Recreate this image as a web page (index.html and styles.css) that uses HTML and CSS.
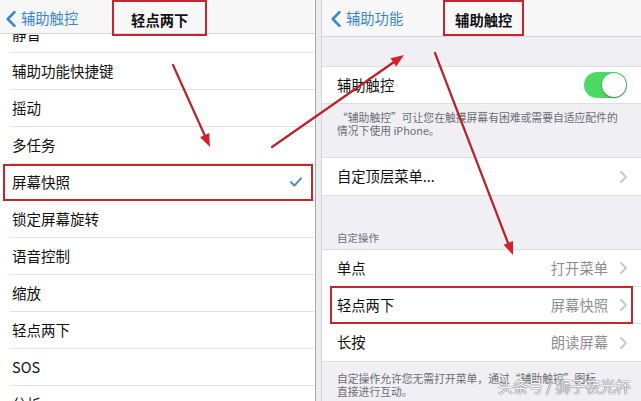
FILE: index.html
```html
<!DOCTYPE html>
<html lang="zh-CN">
<head>
<meta charset="utf-8">
<title>辅助触控</title>
<link rel="stylesheet" href="styles.css">
</head>
<body>
<div class="shot">
  <section class="panel panel-left">
    <header class="nav">
      <a class="back"><svg class="back-chev" width="10" height="16" viewBox="0 0 10 16"><polyline points="8.5,1.2 1.8,8 8.5,14.8"/></svg>辅助触控</a>
      <h1 class="title title-left">轻点两下</h1>
    </header>
    <div class="list-clip">
      <ul class="list">
        <li class="row">静音</li>
        <li class="row">辅助功能快捷键</li>
        <li class="row">摇动</li>
        <li class="row">多任务</li>
        <li class="row row-marked">屏幕快照<svg class="check" width="12" height="10" viewBox="0 0 12 10"><polyline points="1,5.2 4.4,8.6 11,1.4"/></svg></li>
        <li class="row">锁定屏幕旋转</li>
        <li class="row">语音控制</li>
        <li class="row">缩放</li>
        <li class="row">轻点两下</li>
        <li class="row">SOS</li>
        <li class="row">分析</li>
      </ul>
    </div>
  </section>
  <div class="divider"></div>
  <section class="panel panel-right">
    <header class="nav nav-right">
      <a class="back"><svg class="back-chev" width="10" height="16" viewBox="0 0 10 16"><polyline points="8.5,1.2 1.8,8 8.5,14.8"/></svg>辅助功能</a>
      <h1 class="title title-right">辅助触控</h1>
    </header>
    <div class="gap gap-top"></div>
    <div class="group">
      <div class="cell cell-toggle">
        <span class="label">辅助触控</span>
        <span class="switch"><span class="knob"></span></span>
      </div>
    </div>
    <p class="note note-first">“辅助触控”可让您在触摸屏幕有困难或需要自适应配件的<br>情况下使用 iPhone。</p>
    <div class="group">
      <div class="cell">
        <span class="label">自定顶层菜单...</span>
        <svg class="disclosure" width="7" height="12" viewBox="0 0 7 12"><polyline points="1,1 6,6 1,11"/></svg>
      </div>
    </div>
    <div class="section-head">自定操作</div>
    <div class="group">
      <div class="cell cell-sep">
        <span class="label">单点</span>
        <span class="value">打开菜单</span>
        <svg class="disclosure" width="7" height="12" viewBox="0 0 7 12"><polyline points="1,1 6,6 1,11"/></svg>
      </div>
      <div class="cell cell-sep cell-marked">
        <span class="label">轻点两下</span>
        <span class="value">屏幕快照</span>
        <svg class="disclosure" width="7" height="12" viewBox="0 0 7 12"><polyline points="1,1 6,6 1,11"/></svg>
      </div>
      <div class="cell">
        <span class="label">长按</span>
        <span class="value">朗读屏幕</span>
        <svg class="disclosure" width="7" height="12" viewBox="0 0 7 12"><polyline points="1,1 6,6 1,11"/></svg>
      </div>
    </div>
    <p class="note note-last">自定操作允许您无需打开菜单，通过“辅助触控”图标<br>直接进行互动。</p>
  </section>

  <svg class="arrows" width="641" height="401" viewBox="0 0 641 401">
    <g class="shaft">
      <line x1="173" y1="65" x2="205" y2="136"/>
      <line x1="272" y1="147" x2="394" y2="62"/>
      <line x1="435" y1="53" x2="508" y2="243"/>
    </g>
    <g class="head">
      <polygon points="200.1,137.2 209.2,133.1 210,147"/>
      <polygon points="396.2,66.5 390.5,58.3 404,55"/>
      <polygon points="503.6,244.7 513,241.1 513,255"/>
    </g>
  </svg>
  <div class="watermark">头条号 / 狮子夜光杯</div>
</div>
</body>
</html>
```

FILE: styles.css
```css
* {
  box-sizing: border-box;
}

html, body {
  margin: 0;
  padding: 0;
  background: #ffffff;
}

body {
  font-family: "Noto Sans CJK SC", "Noto Sans", sans-serif;
  color: #111111;
}

.shot {
  position: relative;
  width: 641px;
  height: 401px;
  overflow: hidden;
  display: flex;
}

.panel {
  height: 401px;
  display: flex;
  flex-direction: column;
  overflow: hidden;
}

.panel-left {
  width: 316px;
  flex: none;
  background: #ffffff;
  border-right: 1px solid #a9a9ab;
}

.divider {
  width: 6px;
  flex: none;
  background: #ececee;
  border-right: 1px solid #d4d4d6;
}

.panel-right {
  flex: 1;
  background: #efeff4;
}

/* nav bars */
.nav {
  flex: none;
  height: 34px;
  display: flex;
  align-items: flex-start;
  background: #f7f7f8;
  border-bottom: 1px solid #d6d6d8;
  padding-left: 6px;
}

.nav-right {
  height: 37px;
  padding-left: 9px;
}

.back {
  display: flex;
  align-items: center;
  height: 34px;
  padding-top: 3px;
  color: #3a87cc;
  font-size: 14.3px;
  line-height: 1;
}

.back-chev {
  margin-right: 5px;
  fill: none;
  stroke: #3a87cc;
  stroke-width: 2.6;
  stroke-linecap: round;
  stroke-linejoin: round;
}

.title {
  margin: 0;
  height: 36px;
  display: flex;
  align-items: center;
  justify-content: center;
  padding-top: 2px;
  font-size: 14.3px;
  font-weight: 700;
  color: #111111;
  border: 2px solid #c4262d;
  flex: none;
}

.title-left {
  width: 95px;
  margin-left: 34px;
}

.title-right {
  width: 81px;
  margin-left: 40px;
}

/* left list */
.list-clip {
  flex: 1;
  overflow: hidden;
}

.list {
  list-style: none;
  margin: -18px 0 0 0;
  padding: 0;
}

.row {
  height: 37px;
  margin-left: 10px;
  padding-left: 2px;
  padding-right: 13px;
  display: flex;
  align-items: center;
  justify-content: space-between;
  border-bottom: 1px solid #e2e2e4;
  font-size: 14.5px;
  line-height: 1;
}

.row-marked {
  position: relative;
}

.row-marked::after {
  content: "";
  position: absolute;
  left: -7px;
  right: 2px;
  top: 0;
  bottom: -1px;
  border: 2px solid #c4262d;
}

.check {
  fill: none;
  stroke: #4a8cc4;
  stroke-width: 2;
  stroke-linecap: round;
  stroke-linejoin: round;
}

/* right grouped table */
.gap-top {
  height: 29px;
  flex: none;
}

.group {
  flex: none;
  background: #ffffff;
  border-top: 1px solid #dedee2;
  border-bottom: 1px solid #dedee2;
}

.cell {
  height: 37px;
  display: flex;
  align-items: center;
  padding: 0 14px 0 15px;
  font-size: 14.3px;
  line-height: 1;
}

.cell-toggle {
  height: 36px;
}

.cell-sep {
  position: relative;
  border-bottom: 1px solid #e0e0e4;
  margin-left: 15px;
  padding-left: 0;
}

.label {
  flex: 1;
}

.value {
  color: #8e8e93;
  margin-right: 12px;
}

.disclosure {
  fill: none;
  stroke: #c7c7cc;
  stroke-width: 1.8;
  stroke-linecap: round;
  stroke-linejoin: round;
}

.cell-marked::after {
  content: "";
  position: absolute;
  left: -7px;
  right: 8px;
  top: -1px;
  bottom: -1px;
  border: 2px solid #c4262d;
}

.switch {
  width: 43px;
  height: 26px;
  border-radius: 13px;
  background: #4cd964;
  display: flex;
  align-items: center;
  justify-content: flex-end;
  padding: 1px;
}

.knob {
  width: 24px;
  height: 24px;
  border-radius: 50%;
  background: #ffffff;
  box-shadow: 0 1px 2px rgba(0, 0, 0, 0.35), 0 0 0 0.5px rgba(0, 0, 0, 0.1);
}

.note {
  margin: 0;
  flex: none;
  padding: 7px 15px 0 15px;
  font-size: 10.8px;
  line-height: 13px;
  color: #6d6d72;
  white-space: nowrap;
}

.note-first {
  height: 53px;
}

.note-last {
  padding-top: 10px;
}

.section-head {
  flex: none;
  height: 53px;
  padding: 0 15px 5px 15px;
  display: flex;
  align-items: flex-end;
  font-size: 10.5px;
  line-height: 13px;
  color: #6d6d72;
}

/* annotation overlays */
.arrows {
  position: absolute;
  left: 0;
  top: 0;
  pointer-events: none;
}

.shaft line {
  stroke: #b5252b;
  stroke-width: 2.2;
  stroke-linecap: round;
}

.head polygon {
  fill: #d8202a;
}

.watermark {
  position: absolute;
  left: 498px;
  top: 376px;
  font-size: 15px;
  line-height: 20px;
  color: #f6f6f6;
  text-shadow: 0 0 1px #707070, 0 0 1px #707070, 0 0 1px #909090;
  white-space: nowrap;
}
```
